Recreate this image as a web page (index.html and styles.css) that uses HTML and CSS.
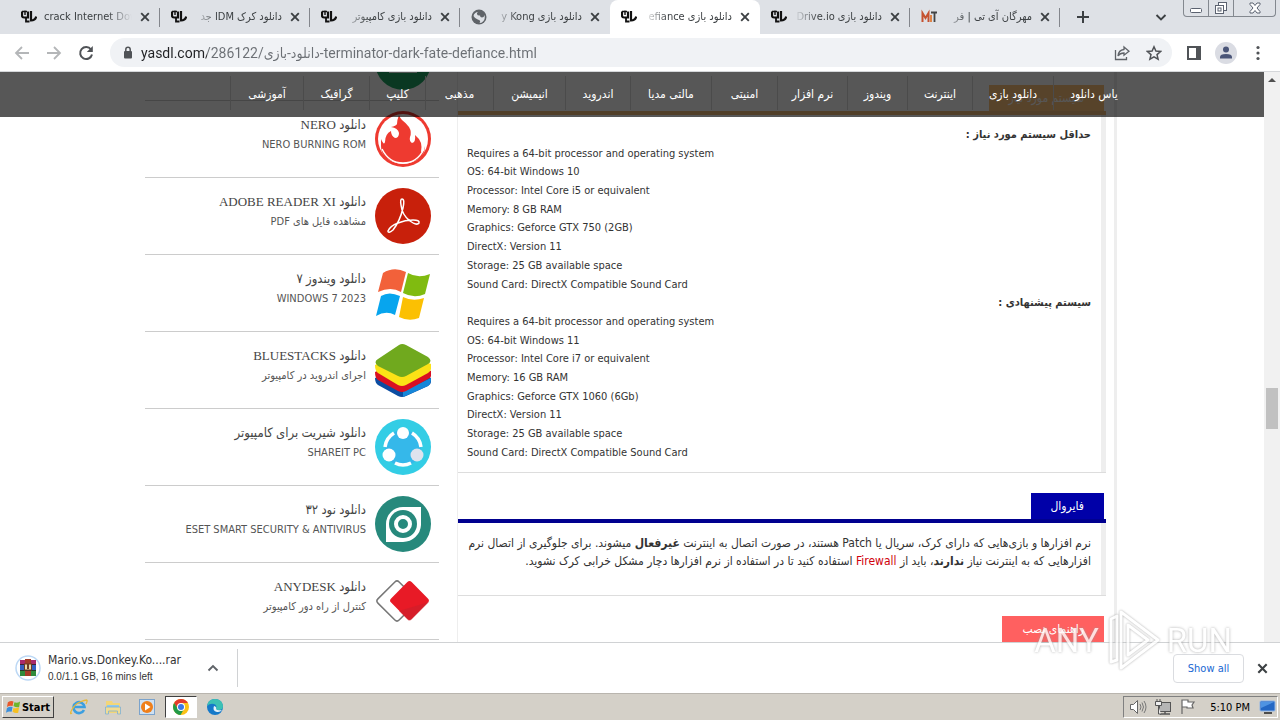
FILE: index.html
```html
<!DOCTYPE html>
<html lang="fa">
<head>
<meta charset="utf-8">
<title>دانلود بازی Terminator Dark Fate Defiance</title>
<link rel="stylesheet" href="styles.css">
</head>
<body>
<svg class="defs" aria-hidden="true">
  <symbol id="yas" viewBox="0 0 16 16"><path d="M1 2.500v4q0 2 2 2h4V2.500" fill="none" stroke="#111" stroke-width="2.200"/><path d="M4 1.500v4.500M1 2.500h5" stroke="#111" stroke-width="1.400"/><path d="M5 8v4.500h3.500" fill="none" stroke="#111" stroke-width="1.800"/><path d="M10 2v9.500q4.500 0 5.200-4" fill="none" stroke="#111" stroke-width="2.200"/></symbol>
  <symbol id="x" viewBox="0 0 10 10"><path d="M1.200 1.200l7.600 7.600M8.800 1.200l-7.600 7.600" stroke="#3c4043" stroke-width="1.900"/></symbol>
</svg>

<header class="tabs">
  <div class="tab ltr"><svg class="fav"><use href="#yas"/></svg><span class="title">crack Internet Dow</span><button class="close" aria-label="Close tab"><svg><use href="#x"/></svg></button></div>
  <div class="tab"><svg class="fav"><use href="#yas"/></svg><span class="title">دانلود کرک IDM جد</span><button class="close" aria-label="Close tab"><svg><use href="#x"/></svg></button></div>
  <div class="tab"><svg class="fav"><use href="#yas"/></svg><span class="title">دانلود بازی کامپیوتر</span><button class="close" aria-label="Close tab"><svg><use href="#x"/></svg></button></div>
  <div class="tab nosep"><svg class="fav" viewBox="0 0 16 16"><circle cx="8" cy="8" r="7.500" fill="#5f6368"/><path d="M8.500 2.500q-3 .500-2.500 2.500t3 1.500q0 2 2 2t2.500-2.500q1 4-1.500 6.500-1.500 1.500-3.500 1.500 1.500-2-.500-3t-3-1.500-2.500-2.500Q3 3 8.500 2.500z" fill="#dee1e6"/></svg><span class="title">دانلود بازی y Kong</span><button class="close" aria-label="Close tab"><svg><use href="#x"/></svg></button></div>
  <div class="tab active"><svg class="fav"><use href="#yas"/></svg><span class="title">دانلود بازی efiance</span><button class="close" aria-label="Close tab"><svg><use href="#x"/></svg></button></div>
  <div class="tab"><svg class="fav"><use href="#yas"/></svg><span class="title">دانلود بازی Drive.io</span><button class="close" aria-label="Close tab"><svg><use href="#x"/></svg></button></div>
  <div class="tab"><svg class="fav" viewBox="0 0 16 16"><path d="M1.500 13V4l3 5 3-5v9" fill="none" stroke="#c5512f" stroke-width="2"/><path d="M10 6v7" stroke="#e07a35" stroke-width="1.800"/><path d="M10 3.500h6M13.500 3.500V13" stroke="#444" stroke-width="1.800"/></svg><span class="title">مهرگان آی تی | فر</span><button class="close" aria-label="Close tab"><svg><use href="#x"/></svg></button></div>
  <button class="newtab" aria-label="New tab"><svg viewBox="0 0 14 14"><path d="M7 1v12M1 7h12" stroke="#3c4043" stroke-width="2"/></svg></button>
  <button class="search" aria-label="Search tabs"><svg viewBox="0 0 12 12"><path d="M1.500 4L6 8.500 10.500 4" fill="none" stroke="#3c4043" stroke-width="1.900"/></svg></button>
  <div class="wincontrols">
    <button aria-label="Minimize"><svg viewBox="0 0 14 14"><rect x="1.500" y="7.500" width="11" height="4" rx="1" fill="#fff" stroke="#5b6270"/></svg></button>
    <button aria-label="Restore"><svg viewBox="0 0 14 14"><rect x="4.500" y="1.500" width="8" height="8" fill="#fff" stroke="#5b6270"/><rect x="1.500" y="4.500" width="8" height="8" fill="#fff" stroke="#5b6270"/><rect x="4" y="7" width="3" height="3" fill="none" stroke="#5b6270"/></svg></button>
    <button aria-label="Close"><svg viewBox="0 0 14 14"><path d="M2 2h3l2 2.500L9 2h3v1.500L9 7l3 3.500V12H9L7 9.500 5 12H2v-1.500L5 7 2 3.500z" fill="#fff" stroke="#5b6270"/></svg></button>
  </div>
</header>

<div class="toolbar">
  <button aria-label="Back"><svg viewBox="0 0 16 16"><path d="M15 8H2M8 2L2 8l6 6" fill="none" stroke="#b4b6b8" stroke-width="1.800"/></svg></button>
  <button aria-label="Forward"><svg viewBox="0 0 16 16"><path d="M1 8h13M8 2l6 6-6 6" fill="none" stroke="#b4b6b8" stroke-width="1.800"/></svg></button>
  <button aria-label="Reload"><svg viewBox="0 0 16 16"><path d="M13 4.500A6 6 0 1 0 14 9.500" fill="none" stroke="#505357" stroke-width="2"/><path d="M14.800 1v6H8.800z" fill="#505357"/></svg></button>
  <div class="omnibox">
    <svg class="lock" viewBox="0 0 10 14"><rect x="1" y="5" width="8" height="7.500" rx="1" fill="#505357"/><path d="M2.800 5V3.500a2.200 2.200 0 0 1 4.400 0V5" fill="none" stroke="#505357" stroke-width="1.500"/></svg>
    <input class="url" type="text" aria-label="Address" dir="ltr" value="yasdl.com/286122/دانلود-بازی-terminator-dark-fate-defiance.html">
    <button aria-label="Share"><svg viewBox="0 0 16 16"><path d="M1.500 5v9.500h11V12" fill="none" stroke="#5f6368" stroke-width="1.300"/><path d="M10 2l5 4.200-5 4V8Q6 8 4 11q.500-6 6-6.500z" fill="none" stroke="#5f6368" stroke-width="1.300"/></svg></button>
    <button aria-label="Bookmark"><svg viewBox="0 0 16 16"><path d="M8 1.800l1.900 4.300 4.700.400-3.600 3.100 1.100 4.600L8 11.800l-4.100 2.400L5 9.600 1.400 6.500l4.700-.400z" fill="none" stroke="#505357" stroke-width="1.500"/></svg></button>
  </div>
  <button aria-label="Side panel"><svg viewBox="0 0 16 16"><rect x="2" y="2" width="12" height="12" fill="none" stroke="#505357" stroke-width="2"/><path d="M10 2h4v12h-4z" fill="#505357"/></svg></button>
  <button class="avatar" aria-label="Profile"><svg viewBox="0 0 22 22"><circle cx="11" cy="11" r="11" fill="#dadce3"/><circle cx="11" cy="7.500" r="3" fill="#4a5578"/><path d="M5 16.500v-1.500q0-3 6-3t6 3v1.500z" fill="#4a5578"/></svg></button>
  <button class="more" aria-label="Menu"><svg viewBox="0 0 16 16"><circle cx="8" cy="2.500" r="1.600" fill="#505357"/><circle cx="8" cy="8" r="1.600" fill="#505357"/><circle cx="8" cy="13.500" r="1.600" fill="#505357"/></svg></button>
</div>

<div class="viewport">
  <div class="page">
    <nav class="menu" dir="rtl"><div class="menu-items">
      <a href="#">یاس دانلود</a><a href="#">دانلود بازی</a><a href="#">اینترنت</a><a href="#">ویندوز</a><a href="#">نرم افزار</a><a href="#">امنیتی</a><a href="#">مالتی مدیا</a><a href="#">اندروید</a><a href="#">انیمیشن</a><a href="#">مذهبی</a><a href="#">کلیپ</a><a href="#">گرافیک</a><a href="#">آموزشی</a>
    </div></nav>
    <div class="columns">
      <aside class="apps" dir="rtl">
        <div class="app partial"><svg class="appicon" viewBox="0 0 56 56"><circle cx="28" cy="28" r="28" fill="#1fa463"/><path d="M14 28h28v11H14z" fill="#e8f5ee"/></svg></div>
        <div class="app"><svg class="appicon" viewBox="0 0 56 56"><circle cx="28" cy="28" r="28" fill="#ee3a30"/><circle cx="28" cy="28" r="25" fill="#fff"/><path d="M6 35q0 16 22 17 22-1 22-17-1 6-4 6 1-5 0-9-2-5-6-8 1 7-3 8-3-2-2-6 2-5-1-10-3-4-7-7-2-2-3-5-2 5-2 9-1 2-6 3 7 1 8 6 0 5-4 5-4-2-4-7-6 3-6 11-1 4-4-3z" fill="#ee3a30"/><path d="M7 38q7 14 21 14t21-14" fill="none" stroke="#fff" stroke-width="1.500"/></svg><div><h4>دانلود NERO</h4><p>NERO BURNING ROM</p></div></div>
        <div class="app"><svg class="appicon" viewBox="0 0 56 56"><circle cx="28" cy="28" r="28" fill="#c8200b"/><path d="M13 43q2-5 10-8 7-3 15-3 7 0 6 3-2 3-9-2-8-6-9-16-1-6 1-6 3 0 1 9-3 13-10 22-5 4-5 1z" fill="none" stroke="#fff" stroke-width="1.500"/></svg><div><h4>دانلود ADOBE READER XI</h4><p>مشاهده فایل های PDF</p></div></div>
        <div class="app"><svg class="appicon" viewBox="0 0 56 56"><path d="M8 8q11-7 23-1l-5 20q-10-6-23 0z" fill="#f2613a"/><path d="M33 8q10 6 22 1l-5 20q-11 5-22-1z" fill="#80bb10"/><path d="M6 31q8-5 19 0l-5 19q-9-5-19 1z" fill="#07a5ee"/><path d="M28 32q10 5 21 1l-5 20q-10 4-20-1z" fill="#fbc003"/></svg><div><h4>دانلود ویندوز ۷</h4><p>WINDOWS 7 2023</p></div></div>
        <div class="app"><svg class="appicon" viewBox="0 0 56 56"><path d="M0 36l27-13 29 13v4q0 2-3 4L31 54q-4 2-8 0L3 43q-3-2-3-7z" fill="#0c4da2"/><path d="M28 55l25-11q3-2 3-8L28 49z" fill="#1687d9"/><path d="M0 30l28-13 28 12v5q0 2-3 3L31 49q-4 2-8 0L3 38q-3-2-3-8z" fill="#d90f22"/><path d="M0 23l28-13 28 12v5q0 2-3 4L31 43q-4 2-8 0L3 31q-3-2-3-8z" fill="#fbe216"/><path d="M3 17L24 3q3-2 7 0l22 12q5 4 0 7L31 34q-4 2-8 0L3 24q-5-4 0-7z" fill="#70a91e"/></svg><div><h4>دانلود BLUESTACKS</h4><p>اجرای اندروید در کامپیوتر</p></div></div>
        <div class="app"><svg class="appicon" viewBox="0 0 56 56"><circle cx="28" cy="28" r="28" fill="#33cde5"/><circle cx="28" cy="29" r="18" fill="#35b8ea"/><g fill="none" stroke="#fff" stroke-width="3.500"><path d="M19 14Q11 19 10 28M37 14q8 5 9 14M20 44q8 4 16 0"/></g><circle cx="28" cy="14" r="6" fill="#fff"/><circle cx="14" cy="36" r="6.500" fill="#fff"/><circle cx="42" cy="36" r="6.500" fill="#dfe3ee"/></svg><div><h4>دانلود شیریت برای کامپیوتر</h4><p>SHAREIT PC</p></div></div>
        <div class="app"><svg class="appicon" viewBox="0 0 56 56"><circle cx="28" cy="28" r="28" fill="#27897c"/><path d="M46 11v18a18 18 0 0 1-18 17H11V28a17 17 0 0 1 17-17z" fill="#fff"/><circle cx="28" cy="28" r="14" fill="#27897c"/><circle cx="28" cy="28" r="7" fill="none" stroke="#fff" stroke-width="4"/></svg><div><h4>دانلود نود ۳۲</h4><p>ESET SMART SECURITY &amp; ANTIVIRUS</p></div></div>
        <div class="app"><svg class="appicon" viewBox="0 0 56 56"><rect x="7" y="13" width="30" height="30" rx="3" transform="rotate(45 22 28)" fill="#fff" stroke="#777" stroke-width="1.500"/><rect x="20" y="13" width="29" height="29" rx="3" transform="rotate(45 34.500 27.500)" fill="#e81a26"/><path d="M54 29L36 47q-2 1-3 0L24 38z" fill="#c9202b" opacity=".6"/></svg><div><h4>دانلود ANYDESK</h4><p>کنترل از راه دور کامپیوتر</p></div></div>
        <div class="app"></div>
      </aside>
      <main class="content">
        <section class="box orange" dir="rtl">
          <h3>سیستم مورد نیاز</h3>
          <div class="body">
            <p><b>حداقل سیستم مورد نیاز :</b></p>
            <p dir="ltr">Requires a 64-bit processor and operating system<br>OS: 64-bit Windows 10<br>Processor: Intel Core i5 or equivalent<br>Memory: 8 GB RAM<br>Graphics: Geforce GTX 750 (2GB)<br>DirectX: Version 11<br>Storage: 25 GB available space<br>Sound Card: DirectX Compatible Sound Card</p>
            <p><b>سیستم پیشنهادی :</b></p>
            <p dir="ltr">Requires a 64-bit processor and operating system<br>OS: 64-bit Windows 11<br>Processor: Intel Core i7 or equivalent<br>Memory: 16 GB RAM<br>Graphics: Geforce GTX 1060 (6Gb)<br>DirectX: Version 11<br>Storage: 25 GB available space<br>Sound Card: DirectX Compatible Sound Card</p>
          </div>
        </section>
        <section class="box blue" dir="rtl">
          <h3>فایروال</h3>
          <div class="body">
            <p>نرم افزارها و بازی‌هایی که دارای کرک، سریال یا Patch هستند، در صورت اتصال به اینترنت <b>غیرفعال</b> میشوند. برای جلوگیری از اتصال نرم<br>افزارهایی که به اینترنت نیاز <b>ندارند</b>، باید از <a href="#">Firewall</a> استفاده کنید تا در استفاده از نرم افزارها دچار مشکل خرابی کرک نشوید.</p>
          </div>
        </section>
        <section class="box red" dir="rtl"><h3>راهنمای نصب</h3></section>
      </main>
    </div>
  </div>
  <div class="scrollbar"><svg viewBox="0 0 16 16"><path d="M4 10l4-4 4 4z" fill="#505050"/></svg><div class="thumb"></div></div>
</div>

<footer class="downloads">
  <svg class="rar" viewBox="0 0 26 26"><circle cx="13" cy="13" r="12" fill="#fff" stroke="#bcd8f5" stroke-width="1.500"/><path d="M5 5h16v5H5z" fill="#a82a6a"/><path d="M5 10h16v5H5z" fill="#3560c0"/><path d="M5 15h16v6H5z" fill="#2f8a3c"/><path d="M10 4h6v17h-6z" fill="#a53a28"/><path d="M5 9.500h16M5 15.500h16" stroke="#222" stroke-width=".8"/><rect x="9.500" y="9" width="7" height="6" fill="#e9d9a8" stroke="#6b3c22"/><path d="M13 9v5" stroke="#6b3c22" stroke-width="2"/></svg>
  <div class="file"><div class="name">Mario.vs.Donkey.Ko....rar</div><div class="status">0.0/1.1 GB, 16 mins left</div></div>
  <button class="up" aria-label="Download options"><svg viewBox="0 0 12 12"><path d="M1.500 8.500L6 4l4.500 4.500" fill="none" stroke="#5f6368" stroke-width="1.900"/></svg></button>
  <button class="showall">Show all</button>
  <button class="closebar" aria-label="Close downloads bar"><svg viewBox="0 0 10 10"><use href="#x"/></svg></button>
</footer>

<div class="taskbar">
  <button class="start"><svg viewBox="0 0 16 16"><path d="M2 3q3-2 6-1L7 7Q4 6 1 8z" fill="#e8582c"/><path d="M9 3q3 1 6-1l-1 6q-3 1-6-1z" fill="#6db52d"/><path d="M1 9q3-2 6-1l-1 5q-3-1-6 1z" fill="#3a8fdc"/><path d="M8 9q3 1 6-1l-1 6q-3 1-6-1z" fill="#f6c021"/></svg>Start</button>
  <button aria-label="Internet Explorer"><svg viewBox="0 0 18 18"><path d="M14 12a5.500 5.500 0 1 1 .500-3H5" fill="none" stroke="#3c9fe0" stroke-width="2.600"/><path d="M2 15Q-1 17 2 11.500T10 4t6.500-2-.500 4" fill="none" stroke="#e8b93a" stroke-width="1.300"/></svg></button>
  <button aria-label="Explorer"><svg viewBox="0 0 18 18"><path d="M2 3h6l1 2h7v10H2z" fill="#f3d678"/><path d="M3 7h12v4H3z" fill="#8fc9ee"/><path d="M1.500 9h15v7h-3v-3h-9v3h-3z" fill="#f1dc93" stroke="#7fb1d4" stroke-width=".8"/></svg></button>
  <button aria-label="Media Player"><svg viewBox="0 0 18 18"><rect x="1.500" y="1.500" width="15" height="15" fill="#cfe1f2" stroke="#7ba3cc"/><circle cx="9" cy="9" r="6" fill="#ef7f1a"/><path d="M7 5.500L12.500 9 7 12.500z" fill="#fff"/></svg></button>
  <button class="pressed" aria-label="Chrome"><svg viewBox="0 0 18 18"><circle cx="9" cy="9" r="8" fill="#fbc116"/><path d="M2.100 5A8 8 0 0 1 15.900 5H9L6 11z" fill="#e33b2e"/><path d="M2.100 5A8 8 0 0 0 8.500 17L12 11H6z" fill="#229a48"/><circle cx="9" cy="9" r="4" fill="#fff"/><circle cx="9" cy="9" r="3" fill="#3b78e7"/></svg></button>
  <button aria-label="Edge"><svg viewBox="0 0 18 18"><circle cx="9" cy="9" r="8" fill="#1579c9"/><path d="M1.200 8Q2 1 9 1q7 0 8 7 0 4-4 4-3 0-3-1.500 1.500-3-2-4.500Q4 5 1.200 8z" fill="#3cc1b4"/><path d="M8 8q-2 5 3 6 3 .500 5-2 2-1 0 0-5 1-6-1 1-2-2-3z" fill="#e6f3fa"/></svg></button>
  <div class="tray">
    <svg viewBox="0 0 18 18"><path d="M1.500 6.500h3l4-4v13l-4-4h-3z" fill="#fff" stroke="#666"/><path d="M11 6q2 3 0 6M13 4.500q3 4.500 0 9M15 3q4 6 0 12" fill="none" stroke="#777"/></svg>
    <svg viewBox="0 0 18 18"><rect x="5.500" y="4.500" width="11" height="9" fill="#b5b5b5" stroke="#555"/><path d="M6 16h10M11 13v3" stroke="#555" stroke-width="1.500"/><path d="M1.500 3.500h6v4h-6zM3 1v3M6 1v3M4.500 8v8H7" fill="#eee" stroke="#555"/></svg>
    <svg viewBox="0 0 18 18"><path d="M3 16V2h6v2h6l-2 3 1 3H8V9H3" fill="#fff" stroke="#666" stroke-width="1.200"/></svg>
    <time>5:10 PM</time>
    <svg class="desk" viewBox="0 0 18 18"><rect x="1" y="3" width="15" height="10" rx="1" fill="#2467c4" stroke="#8fb5e6"/><path d="M2 4h13L2 10z" fill="#4f93e2"/><path d="M5 15h8" stroke="#222" stroke-width="1.500"/></svg>
  </div>
</div>

<div class="watermark" dir="ltr"><span>ANY</span><svg viewBox="0 0 56 64"><path d="M12 8L6 11v43l6-2zM16 4v56l37-28zM23 17v30l20-15z" fill="none" stroke="#fff" stroke-width="3" stroke-linejoin="round"/></svg><span>RUN</span></div>
</body>
</html>
```
FILE: styles.css
```css
* { box-sizing: border-box; }
html, body { height: 100%; }
body {
  margin: 0;
  display: flex;
  flex-direction: column;
  overflow: hidden;
  background: #fff;
  color: #333;
  font: 11px "DejaVu Sans Condensed", "DejaVu Sans", sans-serif;
}
h3, h4, p { margin: 0; font-weight: normal; }
button { border: 0; padding: 0; background: none; font: inherit; color: inherit; display: flex; align-items: center; justify-content: center; }
a { text-decoration: none; color: inherit; }
.defs { display: none; }

.tabs { flex: none; display: flex; height: 34px; padding-left: 10px; background: #dee1e6; }
.tab { flex: 0 1 150px; min-width: 0; display: flex; align-items: center; padding: 0 10px 0 11px; position: relative; }
.tab::after { content: ""; position: absolute; right: 0; top: 8px; height: 19px; border-right: 1px solid #83868c; }
.tab.nosep::after, .tab.active::after { display: none; }
.tab.active { background: #fff; border-radius: 8px 8px 0 0; }
.fav { flex: none; width: 16px; height: 16px; }
.title { flex: 1; min-width: 0; margin: 0 8px 0 7px; overflow: hidden; white-space: nowrap; direction: rtl; color: #3c4043; font-size: 11px; line-height: 20px; -webkit-mask-image: linear-gradient(to right, transparent, #000 24px); mask-image: linear-gradient(to right, transparent, #000 24px); }
.ltr .title { direction: ltr; -webkit-mask-image: linear-gradient(to left, transparent, #000 24px); mask-image: linear-gradient(to left, transparent, #000 24px); }
.close svg { width: 10px; height: 10px; }
.newtab { margin-left: 16px; }
.newtab svg { width: 14px; height: 14px; }
.search { margin-left: auto; margin-right: 16px; }
.search svg { width: 12px; height: 12px; }
.wincontrols { display: flex; height: 17px; margin-right: 4px; border: 1px solid #83888f; border-top: 0; border-radius: 0 0 4px 4px; }
.wincontrols button { width: 25px; border-right: 1px solid #83888f; }
.wincontrols button:last-child { width: 41px; border: 0; }
.wincontrols svg { width: 14px; height: 14px; }

.toolbar { flex: none; display: flex; align-items: center; height: 38px; padding: 0 14px; gap: 16px; border-bottom: 1px solid #d5d7da; background: #fff; }
.toolbar svg { width: 16px; height: 16px; }
.toolbar .avatar { margin: 0 -3px; }
.toolbar .avatar svg { width: 22px; height: 22px; }
.omnibox { flex: 1; display: flex; align-items: center; gap: 16px; height: 29px; margin-right: -2px; padding: 0 10px 0 13px; border-radius: 15px; background: #f0f2f5; }
.toolbar .lock { width: 10px; height: 14px; }
.url { flex: 1; min-width: 0; margin-left: -8px; padding: 0; border: 0; outline: 0; font: 14px "Roboto", "DejaVu Sans Condensed", sans-serif; color: transparent; background: linear-gradient(to right, #202124 66px, #6b6f74 66px); -webkit-background-clip: text; background-clip: text; }

.viewport { flex: 1; min-height: 0; display: flex; overflow: hidden; }
.page { flex: 1; min-width: 0; position: relative; overflow: hidden; }
.menu { position: absolute; z-index: 1; top: 0; left: 0; right: 0; height: 45px; background: rgba(0, 0, 0, .66); color: #fff; }
.menu-items { display: grid; grid-template-columns: 81fr 81fr 65fr 60fr 70fr 66fr 81fr 65fr 72fr 68fr 56fr 66fr 73fr; width: 904px; margin: 0 auto; position: relative; left: 50px; padding-top: 4px; }
.menu-items a { height: 34px; font-size: 12px; line-height: 36px; text-align: center; white-space: nowrap; border-left: 1px solid #4b4b4b; }

.columns { display: flex; width: 974px; max-width: 100%; margin: 0 auto; }
.apps { flex: none; width: 294px; }
.app { display: flex; gap: 9px; height: 77px; padding: 10px 8px 0; border-bottom: 1px solid #ccc; }
.app.partial { height: 29px; padding-top: 0; align-items: flex-end; padding-bottom: 10px; }
.appicon { flex: none; width: 56px; height: 56px; }
.app h4 { font: 13px/20px "Liberation Serif", "DejaVu Sans Condensed", "DejaVu Sans", serif; padding-top: 4px; color: #444; }
.app p { line-height: 20px; color: #555; }

.content { flex: 1; min-width: 0; margin: 0 2px 0 18px; padding-right: 8px; border-left: 1px solid #eee; border-right: 3px solid #eee; }
.box { margin-bottom: 20px; }
.box h3 { width: fit-content; margin-right: 2px; padding: 0 20px; line-height: 26px; color: #fff; font-size: 12px; }
.box .body { border-top: 4px solid; border-bottom: 1px solid #ddd; padding: 11px 15px 10px 9px; line-height: 1.7; box-shadow: inset -5px 0 #eee; }
.orange { padding-top: 13px; }
.orange h3 { background: #ffc37c; }
.orange .body { border-top-color: #eeb87a; }
.blue h3 { background: #0000a8; }
.blue .body { border-top-color: #00008f; padding-bottom: 25px; font-size: 12px; line-height: 18px; white-space: nowrap; }
.red h3 { background: #ff6060; }
.body a { color: #d0000b; }

.scrollbar { flex: none; width: 16px; background: #f1f1f1; }
.scrollbar svg { display: block; width: 16px; height: 16px; }
.thumb { width: 12px; height: 41px; margin: 300px auto 0; background: #c1c1c1; }

.downloads { flex: none; display: flex; align-items: center; height: 51px; padding: 0 12px 0 15px; border-top: 1px solid #d0d2d4; background: #fff; }
.rar { width: 26px; height: 26px; margin-right: 7px; }
.file { width: 159px; }
.name { font-size: 12px; line-height: 17px; }
.status { font: 10px/16px "Liberation Sans", Arial, sans-serif; }
.up { height: 38px; padding-right: 18px; border-right: 1px solid #d0d2d4; }
.up svg { width: 12px; height: 12px; }
.showall { margin-left: auto; width: 71px; height: 29px; border: 1px solid #dadce0; border-radius: 4px; color: #1967d2; }
.closebar { margin-left: 13px; }
.closebar svg { width: 11px; height: 11px; }

.taskbar { flex: none; display: flex; align-items: center; height: 27px; padding-left: 2px; border-top: 1px solid #b9b5ae; background: #d4d0c8; }
.taskbar button { width: 32px; height: 22px; margin-right: 2px; }
.taskbar svg { width: 18px; height: 18px; }
.taskbar .start { width: 52px; margin-right: 9px; gap: 1px; border: 1px solid; border-color: #fff #404040 #404040 #fff; color: #000; font-weight: bold; }
.taskbar .start svg { width: 15px; height: 16px; }
.taskbar .pressed { border: 1px solid; border-color: #404040 #fff #fff #404040; background: #fff; }
.tray { display: flex; align-items: center; gap: 7px; height: 22px; margin-left: auto; margin-right: 2px; padding-left: 5px; border: 1px solid; border-color: #808080 #fff #fff #808080; color: #000; }
.tray time { margin-left: 6px; margin-right: 2px; }

.watermark { position: absolute; z-index: 2; right: 48px; bottom: 48px; display: flex; align-items: center; gap: 6px; pointer-events: none; color: #fff; font: 33px "Liberation Sans Narrow", "Roboto", sans-serif; text-shadow: 0 0 3px #999; opacity: .8; }
.watermark svg { width: 56px; height: 64px; filter: drop-shadow(0 0 1px #999); }
```
